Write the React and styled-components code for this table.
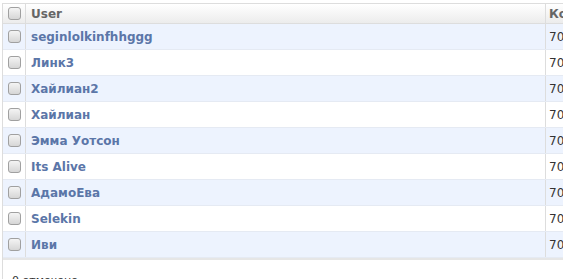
import React from "react";
import styled, { createGlobalStyle } from "styled-components";

const GlobalStyle = createGlobalStyle`
  html, body {
    margin: 0;
    padding: 0;
    background: #fff;
    overflow: hidden;
  }
  body {
    font-family: "DejaVu Sans", Verdana, sans-serif;
  }
`;

function UserList() {
  const users = [
    { id: 1, name: "seginlolkinfhhggg", count: 70 },
    { id: 2, name: "Линк3", count: 70 },
    { id: 3, name: "Хайлиан2", count: 70 },
    { id: 4, name: "Хайлиан", count: 70 },
    { id: 5, name: "Эмма Уотсон", count: 70 },
    { id: 6, name: "Its Alive", count: 70 },
    { id: 7, name: "АдамоЕва", count: 70 },
    { id: 8, name: "Selekin", count: 70 },
    { id: 9, name: "Иви", count: 70 },
  ];

  return (
    <Page>
      <Wrapper>
        <Table>
          <HeadRow>
            <CheckCell>
              <Box />
            </CheckCell>
            <HeadCell>User</HeadCell>
            <HeadCell last>Ко</HeadCell>
          </HeadRow>
          {users.map((user, i) => (
            <Row key={user.id} odd={i % 2 === 0}>
              <CheckCell>
                <Box />
              </CheckCell>
              <NameCell>
                <a href="#">{user.name}</a>
              </NameCell>
              <NumCell>{user.count}</NumCell>
            </Row>
          ))}
          <Footer />
        </Table>
        <Selected>0 отмечено</Selected>
      </Wrapper>
    </Page>
  );
}

export default function App() {
  return (
    <>
      <GlobalStyle />
      <UserList />
    </>
  );
}

const Page = styled.div`
  width: 563px;
  height: 279px;
  overflow: hidden;
`;

const Wrapper = styled.div`
  width: 620px;
  margin: 3px 0 0 2px;
  border-left: 1px solid #dddddd;
`;

const Table = styled.div`
  border-top: 1px solid #dddddd;
`;

const HeadRow = styled.div`
  display: grid;
  grid-template-columns: 23px 520px 1fr;
  height: 19px;
  background: linear-gradient(#ffffff, #ececec);
  border-bottom: 1px solid #dddddd;
`;

const Row = styled.div`
  display: grid;
  grid-template-columns: 23px 520px 1fr;
  height: 25px;
  background: ${(p) => (p.odd ? "#edf3fe" : "#ffffff")};
  border-bottom: 1px solid #e5eaf3;
`;

const CheckCell = styled.div`
  display: flex;
  align-items: center;
  justify-content: center;
  border-right: 1px solid #dddddd;
`;

const Box = styled.span`
  width: 11px;
  height: 11px;
  border: 1px solid #a0a0a0;
  border-radius: 3px;
  background: linear-gradient(#f4f4f4, #d6d6d6);
`;

const HeadCell = styled.div`
  display: flex;
  align-items: center;
  padding-left: ${(p) => (p.last ? "3px" : "5px")};
  font-size: 12px;
  font-weight: bold;
  color: #666666;
  border-right: ${(p) => (p.last ? "none" : "1px solid #dddddd")};
`;

const NameCell = styled.div`
  display: flex;
  align-items: center;
  padding-left: 5px;
  border-right: 1px solid #dddddd;
  > a {
    font-size: 12px;
    font-weight: bold;
    color: #5b76a8;
    text-decoration: none;
  }
`;

const NumCell = styled.div`
  display: flex;
  align-items: center;
  padding-left: 3px;
  font-size: 12px;
  color: #333333;
`;

const Footer = styled.div`
  height: 2px;
  background: #e6e6e6;
`;

const Selected = styled.div`
  padding: 14px 0 0 9px;
  font-size: 11px;
  color: #333333;
  white-space: nowrap;
`;
